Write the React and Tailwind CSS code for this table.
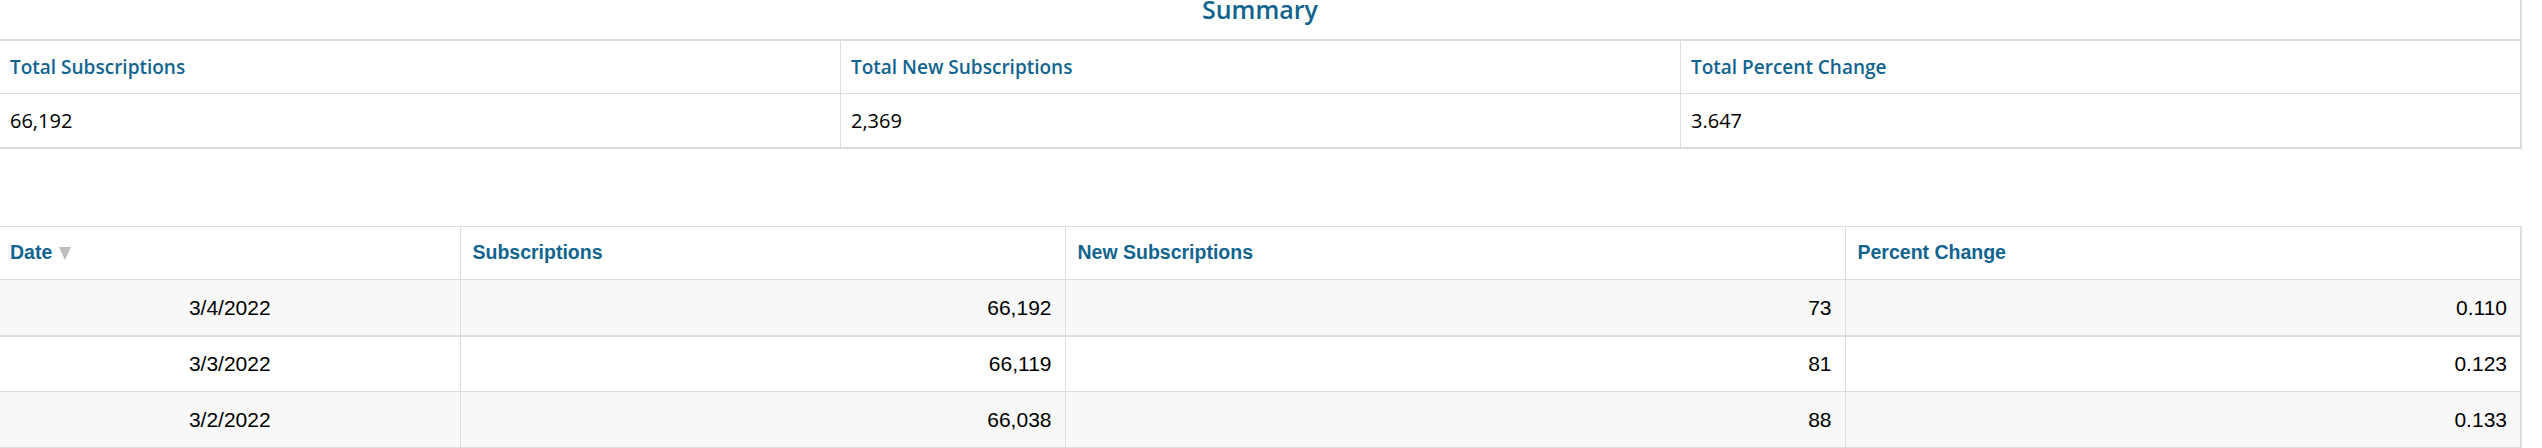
import React from "react";

const teal = "text-[#11648f]";

function SummaryTable() {
  const heads = ["Total Subscriptions", "Total New Subscriptions", "Total Percent Change"];
  const vals = ["66,192", "2,369", "3.647"];
  return (
    <div className="w-[2522px] border-r-2 border-[#dddddd] font-['Open_Sans',sans-serif]">
      <div className="h-[39px] flex justify-center items-start overflow-hidden">
        <span className={`text-[25px] leading-[19px] font-semibold ${teal}`}>Summary</span>
      </div>
      <div className="grid grid-cols-3 border-t-2 border-b-2 border-[#dddddd]">
        {heads.map((h, i) => (
          <div
            key={h}
            className={`h-[53px] flex items-center pl-[10px] border-b border-[#dddddd] ${i > 0 ? "border-l" : ""} text-[19px] font-semibold ${teal}`}
          >
            {h}
          </div>
        ))}
        {vals.map((v, i) => (
          <div
            key={v}
            className={`h-[53px] flex items-center pl-[10px] border-[#dddddd] ${i > 0 ? "border-l" : ""} text-[20px] text-black`}
          >
            {v}
          </div>
        ))}
      </div>
    </div>
  );
}

function SortIcon() {
  return (
    <svg width="14" height="14" viewBox="0 0 14 14" className="ml-[6px] inline-block">
      <polygon points="1,1 13,1 7,14" fill="#bdbdbd" />
    </svg>
  );
}

const rows = [
  ["3/4/2022", "66,192", "73", "0.110"],
  ["3/3/2022", "66,119", "81", "0.123"],
  ["3/2/2022", "66,038", "88", "0.133"],
];

function DataTable() {
  return (
    <table className="w-[2522px] table-fixed border-collapse font-['Liberation_Sans',Arial,sans-serif] border-r-2 border-[#dddddd]">
      <colgroup>
        <col className="w-[460px]" />
        <col className="w-[605px]" />
        <col className="w-[780px]" />
        <col />
      </colgroup>
      <thead>
        <tr className="h-[53px] border-t border-b border-[#dddddd]">
          <th className={`text-left font-bold text-[19.5px] pl-[10px] ${teal} border-[#dddddd]`}>
            <span className="inline-flex items-center">
              Date
              <SortIcon />
            </span>
          </th>
          <th className={`text-left font-bold text-[19.5px] pl-[12px] ${teal} border-l border-[#dddddd]`}>Subscriptions</th>
          <th className={`text-left font-bold text-[19.5px] pl-[12px] ${teal} border-l border-[#dddddd]`}>New Subscriptions</th>
          <th className={`text-left font-bold text-[19.5px] pl-[12px] ${teal} border-l border-[#dddddd]`}>Percent Change</th>
        </tr>
      </thead>
      <tbody>
        {rows.map((r, i) => (
          <tr
            key={r[0]}
            className={`h-[56px] border-[#dddddd] ${i === 1 ? "bg-white border-b" : "bg-[#f8f8f8] border-b-2"}`}
          >
            <td className="text-center text-[21px] text-black">{r[0]}</td>
            <td className="text-right text-[21px] text-black pr-[13px] border-l border-[#dddddd]">{r[1]}</td>
            <td className="text-right text-[21px] text-black pr-[13px] border-l border-[#dddddd]">{r[2]}</td>
            <td className="text-right text-[21px] text-black pr-[13px] border-l border-[#dddddd]">{r[3]}</td>
          </tr>
        ))}
      </tbody>
    </table>
  );
}

export default function App() {
  return (
    <div className="w-[2542px] h-[448px] bg-white overflow-hidden">
      <SummaryTable />
      <div className="h-[77px]" />
      <DataTable />
    </div>
  );
}
